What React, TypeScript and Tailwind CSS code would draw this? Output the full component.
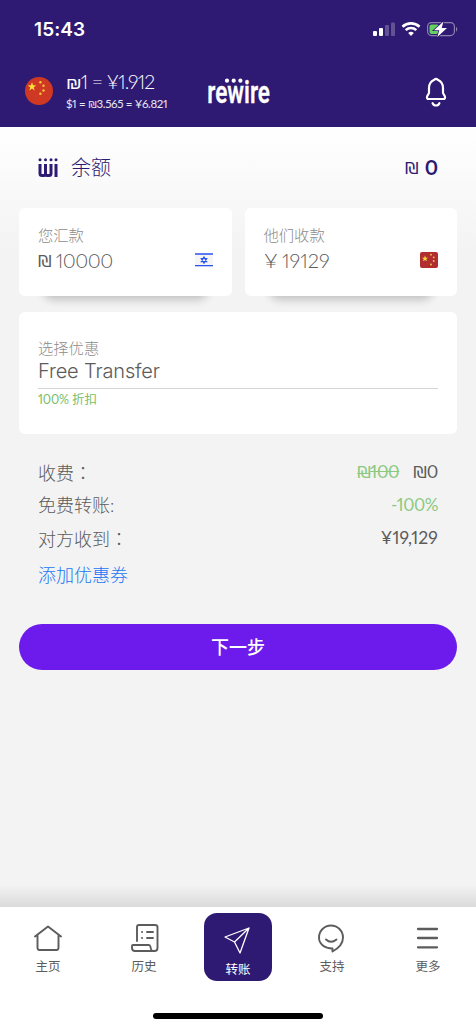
import type { ReactNode } from 'react'

type NavItemProps = {
  label: string
  className: string
  children: ReactNode
}

const STAR = 'M0 -1 L.24 -.32 L.95 -.31 L.38 .12 L.59 .81 L0 .4 L-.59 .81 L-.38 .12 L-.95 -.31 L-.24 -.32 Z'

function StatusIcons() {
  return (
    <svg className="h-[18px] w-[86px]" viewBox="372 20 86 18" fill="none">
      <rect x="373" y="31" width="4" height="5" rx="1" fill="#fff" />
      <rect x="379" y="28" width="4" height="8" rx="1" fill="#fff" />
      <rect x="385" y="25" width="4" height="11" rx="1" fill="#fff" fillOpacity=".25" />
      <rect x="391" y="22.500" width="4" height="13.500" rx="1" fill="#fff" fillOpacity=".25" />
      <path d="M402.500 26.800a12.500 12.500 0 0 1 17 0" stroke="#fff" strokeWidth="2.700" />
      <path d="M405.700 30.200a7.700 7.700 0 0 1 10.600 0" stroke="#fff" strokeWidth="2.500" />
      <path d="M408.200 33a4.200 4.200 0 0 1 5.600 0L411 36Z" fill="#fff" />
      <rect x="427.600" y="22.600" width="26.800" height="13" rx="4" stroke="#fff" strokeOpacity=".45" strokeWidth="1.200" />
      <path d="M456 27v4.500c1.600-.6 1.600-3.900 0-4.500Z" fill="#fff" fillOpacity=".45" />
      <rect x="429.500" y="24.500" width="9.500" height="9.500" rx="2" fill="#65d15f" />
      <path d="M443.500 21.500l-9.500 8.700h5.300l-2 6.800 9.700-9h-5.300Z" fill="#fff" stroke="#2e1a72" strokeWidth="1.600" paintOrder="stroke" />
    </svg>
  )
}

function RoundFlag() {
  return (
    <svg className="size-7" viewBox="0 0 28 28">
      <circle cx="14" cy="14" r="14" fill="#cf3923" />
      <path d={STAR} transform="translate(7 9.800) scale(4.500)" fill="#fbe03d" />
      <g fill="#f5c93b">
        <circle cx="15.400" cy="5.200" r="1.200" />
        <circle cx="18.500" cy="8.800" r="1.200" />
        <circle cx="18.500" cy="13.500" r="1.200" />
        <circle cx="15.400" cy="16.800" r="1.200" />
      </g>
    </svg>
  )
}

function ChinaFlag() {
  return (
    <svg className="h-4 w-[18px]" viewBox="0 0 18 16">
      <rect width="18" height="16" rx="2" fill="#b02d30" />
      <path d={STAR} transform="translate(5 6.700) scale(3.300)" fill="#fbdc3c" />
      <g fill="#f5cf3b">
        <circle cx="11" cy="2.700" r=".9" />
        <circle cx="13.700" cy="5.300" r=".9" />
        <circle cx="13.700" cy="9" r=".9" />
        <circle cx="11" cy="12.500" r=".9" />
      </g>
    </svg>
  )
}

function IsraelFlag() {
  return (
    <svg className="h-[14px] w-[18px]" viewBox="0 0 18 14" fill="none">
      <rect width="18" height="14" fill="#f5f5f5" />
      <path d="M0 1h18M0 12.700h18" stroke="#2b54f0" strokeWidth="1.300" />
      <path d="M9 4l2.700 4.600H6.300ZM9 10.100L6.300 5.500h5.400Z" stroke="#2b54f0" strokeWidth="1.200" />
    </svg>
  )
}

function Logo() {
  return (
    <svg className="h-[46px] w-[66px] overflow-visible" viewBox="206 68 66 46" fill="#fff">
      <text
        x="207.300"
        y="102.700"
        textLength="62.700"
        lengthAdjust="spacingAndGlyphs"
        stroke="#fff"
        strokeWidth=".3"
        className="font-['Roboto',sans-serif] text-[31.500px] font-semibold"
      >
        rewire
      </text>
      <circle cx="227" cy="80.700" r="2.100" />
      <circle cx="233.700" cy="80.700" r="2.100" />
      <circle cx="240.400" cy="80.700" r="2.100" />
    </svg>
  )
}

function BalanceMark() {
  return (
    <svg className="h-5 w-5" viewBox="0 0 20 20" fill="none" stroke="#2e1a72" strokeWidth="3">
      <path d="M2 6v9.500q0 2 2 2h2q1.500 0 1.500-2V6M7.500 15.500q0 2 1.500 2h2q2 0 2-2V6M18 6v13" />
      <g fill="#2e1a72" stroke="none">
        <circle cx="2" cy="1.800" r="1.500" />
        <circle cx="7.500" cy="1.800" r="1.500" />
        <circle cx="13" cy="1.800" r="1.500" />
        <circle cx="18" cy="1.800" r="1.500" />
      </g>
    </svg>
  )
}

function BellIcon() {
  return (
    <svg className="h-[30px] w-[22px]" viewBox="0 0 22 30" fill="none" stroke="#fff" strokeWidth="2.200" strokeLinecap="round" strokeLinejoin="round">
      <path d="M9.300 2.700Q11 .9 12.700 2.700Q18 5 18 11v5l1.800 3.200q1 2.800-1.800 2.800H4q-2.800 0-1.800-2.800L4 16v-5q0-6 5.300-8.300Z" />
      <path d="M7.600 26.200q1 2.300 3.400 2.300t3.400-2.300" />
    </svg>
  )
}

function Shekel({ className }: { className: string }) {
  return <span className={`inline-block scale-x-115 font-['DejaVu_Sans',sans-serif] ${className}`}>₪</span>
}

function NavItem({ label, className, children }: NavItemProps) {
  return (
    <div className={`flex flex-col items-center text-[12.500px] leading-[18px] ${className}`}>
      <svg className="h-[30px] w-[30px]" viewBox="0 0 30 30" fill="none" stroke="currentColor" strokeWidth="1.900" strokeLinecap="round" strokeLinejoin="round">
        {children}
      </svg>
      <span className="mt-[5px]">{label}</span>
    </div>
  )
}

export default function App() {
  return (
    <main className="flex h-[1030px] w-[476px] flex-col overflow-hidden bg-[#f3f3f3] font-['Lato','Noto_Sans_CJK_SC',sans-serif] text-[#5c5c5c] proportional-nums">
      <header className="h-[127px] bg-[#2e1a72] text-white">
        <div className="flex h-[58px] items-center justify-between pr-[18px] pl-[34px]">
          <span className="mt-[2px] font-['Inter',sans-serif] text-[19px] font-semibold tracking-[0.1px]">15:43</span>
          <StatusIcons />
        </div>
        <div className="flex h-[69px] items-start pr-[29px] pl-[25px]">
          <div className="mt-[19px]"><RoundFlag /></div>
          <div className="mt-3 ml-[13px] w-[140px] whitespace-nowrap">
            <div className="text-[19.500px] leading-6 font-light tracking-[-0.8px]"><Shekel className="ml-[1px] mr-[1px] text-[16px] leading-5" />1 = ¥1.912</div>
            <div className="mt-[2px] text-[11.500px] leading-4 font-normal tracking-[-0.35px] text-white/90">$1 = <Shekel className="mx-[1px] text-[9px] leading-3" />3.565 = ¥6.821</div>
          </div>
          <div className="mt-[10px]"><Logo /></div>
          <div className="mt-[19px] ml-auto"><BellIcon /></div>
        </div>
      </header>

      <section className="h-[780px] bg-[linear-gradient(to_bottom,#ffffff_0px,#f3f3f3_125px,#f3f3f3_758px,#dadada_780px)] px-[19px]">
        <div className="flex h-[81px] items-center px-[19px] text-[#2e1a72]">
          <BalanceMark />
          <span className="-mt-[2px] ml-[13px] font-['Noto_Sans_CJK_SC',sans-serif] text-[20px] leading-6 font-light">余额</span>
          <Shekel className="mt-[4px] ml-auto text-[15px]" />
          <span className="-mt-[1px] ml-[7px] text-[20px] leading-6 font-bold">0</span>
        </div>

        <div className="grid grid-cols-2 gap-[13px]">
          <div className="relative">
            <div className="absolute inset-x-6 bottom-0 h-5 rounded-full shadow-[0_4px_9px_rgba(0,0,0,0.2)]" />
            <div className="relative h-[88px] rounded-md bg-white px-[19px] pt-4">
              <div className="text-[15.300px] leading-[23px] font-light text-[#8c8c8c]">您汇款</div>
              <div className="mt-[1px] flex h-6 items-center">
                <Shekel className="mt-[4px] ml-[1px] text-[15px]" />
                <span className="-mt-[1px] ml-[5px] text-[20px] font-light tracking-[-0.5px]">10000</span>
                <div className="ml-auto"><IsraelFlag /></div>
              </div>
            </div>
          </div>
          <div className="relative">
            <div className="absolute inset-x-6 bottom-0 h-5 rounded-full shadow-[0_4px_9px_rgba(0,0,0,0.2)]" />
            <div className="relative h-[88px] rounded-md bg-white px-[19px] pt-4">
              <div className="text-[15.300px] leading-[23px] font-light text-[#8c8c8c]">他们收款</div>
              <div className="mt-[1px] flex h-6 items-center text-[20px] font-light">
                <span className="-mt-[1px] inline-block origin-left scale-x-110">¥</span>
                <span className="-mt-[1px] ml-[6px]">19129</span>
                <div className="ml-auto"><ChinaFlag /></div>
              </div>
            </div>
          </div>
        </div>

        <div className="mt-4 h-[122px] rounded-md bg-white px-[19px] pt-[25px]">
          <div className="text-[15.300px] leading-[23px] font-light text-[#8c8c8c]">选择优惠</div>
          <div className="mt-[1px] h-[28px] border-b border-[#d4d4d4] font-['Inter',sans-serif] text-[20px] leading-5 font-[350] tracking-[-0.15px]">Free Transfer</div>
          <div className="text-[12.500px] leading-[21px] tracking-[-0.1px] text-[#79be69]">100% 折扣</div>
        </div>

        <div className="px-[19px] pt-[21px] text-[18px] leading-[34px] font-light">
          <div className="flex h-[33px] justify-between">
            <span>收费<span className="font-['Noto_Sans_CJK_TC',sans-serif]">：</span></span>
            <span className="flex gap-[14px] text-[17.500px] font-normal tracking-[-0.3px]">
              <span className="text-[#8bc97f]"><s><Shekel className="mx-[1px] text-[15px] leading-5 line-through" />100</s></span>
              <span><Shekel className="mx-[1px] text-[15px] leading-5" />0</span>
            </span>
          </div>
          <div className="flex h-[33px] justify-between">
            <span>免费转账:</span>
            <span className="text-[17px] font-normal tracking-[-0.4px] text-[#8bc97f]">-100%</span>
          </div>
          <div className="flex h-[33px] justify-between">
            <span>对方收到<span className="font-['Noto_Sans_CJK_TC',sans-serif]">：</span></span>
            <span className="text-[17.500px] font-normal tracking-[0.1px]">¥19,129</span>
          </div>
          <div className="mt-1 h-[33px] text-[#1976f5]">添加优惠券</div>
        </div>

        <button className="mt-[33px] h-[46px] w-full rounded-full bg-[#6d1bed] text-[18px] font-medium text-white">下一步</button>
      </section>

      <nav className="flex h-[105px] shrink-0 items-start justify-center bg-white">
        <NavItem label="主页" className="w-24 pt-4">
          <path d="M2 13.500 15 3.500l13 10M4.500 12.500v12q0 2.500 2 2.500h17q2 0 2-2.500v-12" />
        </NavItem>
        <NavItem label="历史" className="w-24 pt-4">
          <path d="M8 18V4q0-2 2-2h16q2.500 0 2.500 2v21q0 3-3 3H6q-3 0-3-3v-2q0-1 1-1h16q1 0 1.500 2 .5 4 3 4M18 9h6M18 15h6M13 9h.1M13 15h.1" />
        </NavItem>
        <NavItem label="转账" className="mx-[12px] mt-[6px] h-[68px] w-[68px] rounded-[13px] bg-[#2e1a72] pt-[13px] text-white">
          <path d="M2 11 26 2 17 27 11.500 16Z M11.500 16 26 2" strokeWidth="1.300" />
        </NavItem>
        <NavItem label="支持" className="w-24 pt-4">
          <path d="M15.500 28.500v-3C7 25.500 2 20.500 2 14.500a12 12 0 1 1 24 0c0 6-4 10.500-10.500 14ZM9 16.500q5 4.500 10.500 0" />
        </NavItem>
        <NavItem label="更多" className="w-24 pt-4">
          <path d="M5 6h19M5 15h19M5 24.300h19" strokeWidth="2.300" />
        </NavItem>
      </nav>
      <div className="flex h-[18px] shrink-0 items-start justify-center bg-white pt-[1px]">
        <div className="h-[6px] w-[170px] rounded-full bg-black" />
      </div>
    </main>
  )
}
